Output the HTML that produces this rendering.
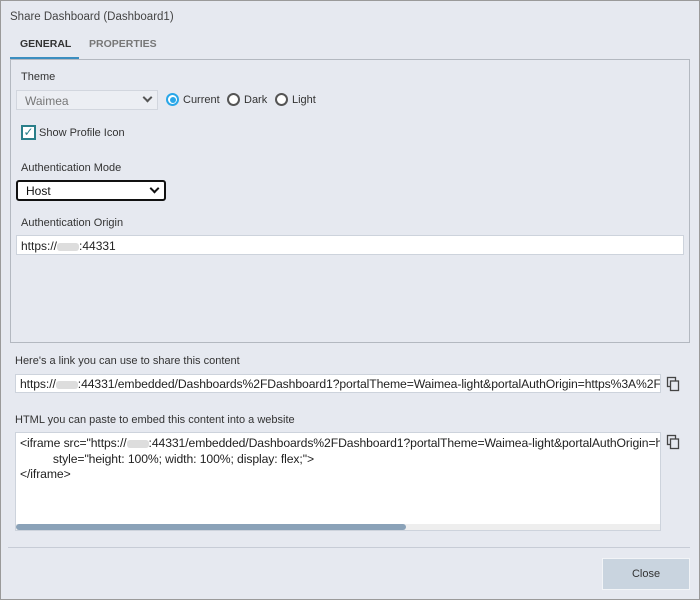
<!DOCTYPE html>
<html><head><style>
*{box-sizing:border-box;margin:0;padding:0}
body{width:700px;height:600px;background:#e6e9f0;font-family:"Liberation Sans",sans-serif;font-size:11px;color:#333;position:relative;overflow:hidden}
.a{position:absolute;white-space:nowrap}
.frame{position:absolute;left:0;top:0;width:700px;height:600px;border:1px solid #9a9a9a}
.inp{position:absolute;background:#fff;border:1px solid #cdd3dc;overflow:hidden;white-space:nowrap;padding-left:4px;color:#222}
.blur{display:inline-block;width:22px;height:8px;background:#ddd;vertical-align:middle;border-radius:3px}
.radio{position:absolute;width:13px;height:13px;border-radius:50%;border:2px solid #555;background:#fff}
.chev{position:absolute;right:6px;top:6px;width:7px;height:7px;border-right:2px solid #444;border-bottom:2px solid #444;transform:rotate(45deg);top:3px}
</style></head><body>
<div class="frame"></div>
<div class="a" style="left:10px;top:11px;font-size:11.5px;color:#444">Share Dashboard (Dashboard1)</div>
<div class="a" style="left:20px;top:38px;font-weight:bold;color:#333;font-size:10.5px">GENERAL</div>
<div class="a" style="left:89px;top:38px;font-weight:bold;color:#777;font-size:10.5px">PROPERTIES</div>
<div class="a" style="left:10px;top:57px;width:69px;height:2px;background:#3b8ec0"></div>
<div class="a" style="left:10px;top:59px;width:680px;height:284px;border:1px solid #b3b8c0"></div>
<div class="a" style="left:21px;top:71px">Theme</div>
<div class="a" style="left:16px;top:90px;width:142px;height:20px;border:1px solid #d2d6de;background:#eceef3;color:#777;padding:3px 0 0 8px;font-size:12px">Waimea<span class="chev" style="border-color:#555"></span></div>
<div class="radio" style="left:166px;top:93px;border-color:#2aa7e8"><div style="position:absolute;left:1.5px;top:1.5px;width:6px;height:6px;border-radius:50%;background:#2aa7e8"></div></div>
<div class="a" style="left:183px;top:94px">Current</div>
<div class="radio" style="left:227px;top:93px"></div>
<div class="a" style="left:244px;top:94px">Dark</div>
<div class="radio" style="left:275px;top:93px"></div>
<div class="a" style="left:292px;top:94px">Light</div>
<div class="a" style="left:21px;top:125px;width:15px;height:15px;border:2px solid #2a7f8a;background:#fff;color:#2a7f8a;font-size:12px;line-height:11px;text-align:center">&#10003;</div>
<div class="a" style="left:39px;top:127px">Show Profile Icon</div>
<div class="a" style="left:21px;top:162px">Authentication Mode</div>
<div class="a" style="left:16px;top:180px;width:150px;height:21px;border:2px solid #111;border-radius:3px;background:#fff;padding:2px 0 0 8px;color:#111;font-size:12px">Host<span class="chev" style="border-color:#111"></span></div>
<div class="a" style="left:21px;top:217px">Authentication Origin</div>
<div class="inp" style="left:16px;top:235px;width:668px;height:20px;padding-top:3px;font-size:12px">https://<span class="blur"></span>:44331</div>
<div class="a" style="left:15px;top:355px">Here's a link you can use to share this content</div>
<div class="inp" style="left:15px;top:374px;width:646px;height:19px;padding-top:2px;font-size:12.2px;letter-spacing:-0.1px">https://<span class="blur"></span>:44331/embedded/Dashboards%2FDashboard1?portalTheme=Waimea-light&amp;portalAuthOrigin=https%3A%2F</div>
<div class="a" style="left:15px;top:414px">HTML you can paste to embed this content into a website</div>
<div class="inp" style="left:15px;top:432px;width:646px;height:99px;padding-top:3px;line-height:15.5px;font-size:12.2px;letter-spacing:-0.1px">&lt;iframe src="https://<span class="blur"></span>:44331/embedded/Dashboards%2FDashboard1?portalTheme=Waimea-light&amp;portalAuthOrigin=https<br>&nbsp;&nbsp;&nbsp;&nbsp;&nbsp;&nbsp;&nbsp;&nbsp;&nbsp;&nbsp;style="height: 100%; width: 100%; display: flex;"&gt;<br>&lt;/iframe&gt;
<div style="position:absolute;left:0;bottom:0;width:644px;height:6px;background:#eee"></div>
<div style="position:absolute;left:0;bottom:0;width:390px;height:6px;background:#8aa2b8;border-radius:3px"></div></div>
<svg class="a" style="left:666px;top:376px" width="15" height="16" viewBox="0 0 15 16"><rect x="1.5" y="1.5" width="8" height="9" fill="none" stroke="#444" stroke-width="1.3"/><rect x="4.5" y="5" width="8" height="9.5" fill="#e6e9f0" stroke="#444" stroke-width="1.3"/></svg>
<svg class="a" style="left:666px;top:434px" width="15" height="16" viewBox="0 0 15 16"><rect x="1.5" y="1.5" width="8" height="9" fill="none" stroke="#444" stroke-width="1.3"/><rect x="4.5" y="5" width="8" height="9.5" fill="#e6e9f0" stroke="#444" stroke-width="1.3"/></svg>
<div class="a" style="left:8px;top:547px;width:682px;height:1px;background:#c7ccd6"></div>
<div class="a" style="left:602px;top:558px;width:88px;height:32px;background:#c9d4df;border:1px solid #f2f4f7;text-align:center;line-height:30px;color:#333">Close</div>
</body></html>
